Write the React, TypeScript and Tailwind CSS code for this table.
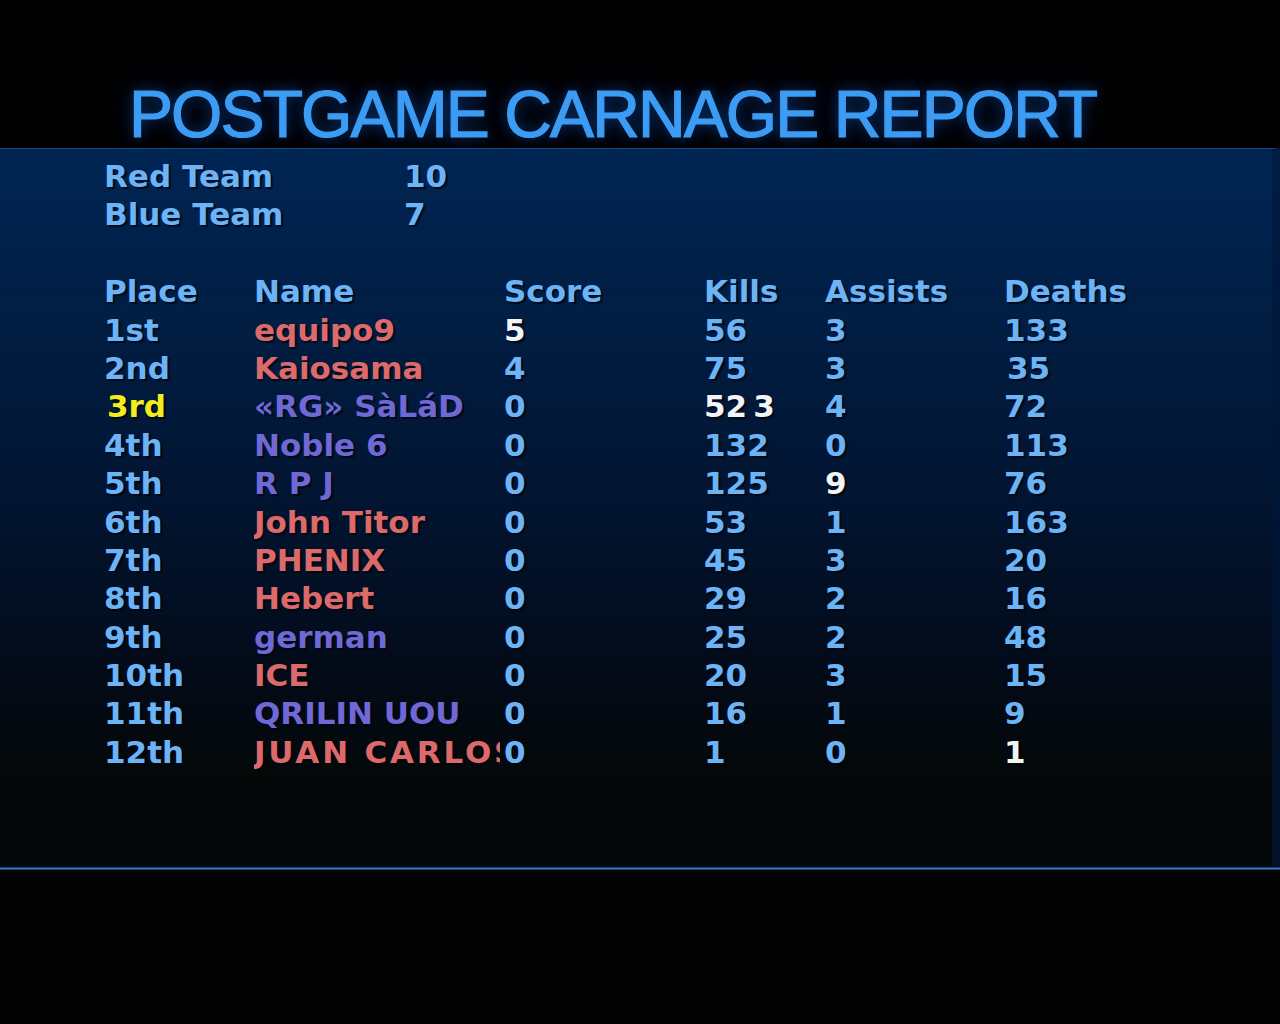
import React from "react";

type Row = {
  place: string;
  name: string;
  team: "red" | "blue";
  score: React.ReactNode;
  kills: React.ReactNode;
  assists: React.ReactNode;
  deaths: React.ReactNode;
  yellow?: boolean;
  wide?: boolean;
};

const W = ({ children }: { children: React.ReactNode }) => (
  <span className="text-[#f4f4f4]">{children}</span>
);

const rows: Row[] = [
  { place: "1st", name: "equipo9", team: "red", score: <W>5</W>, kills: "56", assists: "3", deaths: "133" },
  { place: "2nd", name: "Kaiosama", team: "red", score: "4", kills: "75", assists: "3", deaths: <span className="pl-[3px]">35</span> },
  {
    place: "3rd",
    name: "«RG» SàLáD",
    team: "blue",
    score: "0",
    kills: (
      <W>
        52<span className="ml-[6px]">3</span>
      </W>
    ),
    assists: "4",
    deaths: "72",
    yellow: true,
  },
  { place: "4th", name: "Noble 6", team: "blue", score: "0", kills: "132", assists: "0", deaths: "113" },
  { place: "5th", name: "R P J", team: "blue", score: "0", kills: "125", assists: <W>9</W>, deaths: "76" },
  { place: "6th", name: "John Titor", team: "red", score: "0", kills: "53", assists: "1", deaths: "163" },
  { place: "7th", name: "PHENIX", team: "red", score: "0", kills: "45", assists: "3", deaths: "20" },
  { place: "8th", name: "Hebert", team: "red", score: "0", kills: "29", assists: "2", deaths: "16" },
  { place: "9th", name: "german", team: "blue", score: "0", kills: "25", assists: "2", deaths: "48" },
  { place: "10th", name: "ICE", team: "red", score: "0", kills: "20", assists: "3", deaths: "15" },
  { place: "11th", name: "QRILIN UOU", team: "blue", score: "0", kills: "16", assists: "1", deaths: "9" },
  { place: "12th", name: "JUAN CARLOS", team: "red", score: "0", kills: "1", assists: "0", deaths: <W>1</W>, wide: true },
];

const grid = "grid grid-cols-[150px_250px_200px_121px_179px_1fr] h-[38.4px] leading-[38.4px]";

export default function App() {
  return (
    <div
      className="w-[1280px] h-[1024px] bg-[#030304] overflow-hidden flex flex-col"
      style={{ fontFamily: '"DejaVu Sans", Verdana, sans-serif' }}
    >
      {/* Title area */}
      <div className="h-[148px] shrink-0 bg-black pt-[81px] pl-[129px]">
        <div
          className="text-[66px] leading-[66px] tracking-[-1.9px] text-[#3c9cf4] whitespace-nowrap [-webkit-text-stroke:1.2px_#3c9cf4] [text-shadow:0_0_14px_rgba(20,110,230,0.55),0_0_40px_rgba(10,60,140,0.5)]"
          style={{ fontFamily: '"Liberation Sans", Arial, sans-serif' }}
        >
          POSTGAME CARNAGE REPORT
        </div>
      </div>

      {/* Panel */}
      <div className="h-[720px] shrink-0 border-t border-[#1c4a7c] bg-[linear-gradient(to_bottom,#002553_0%,#011d42_25%,#021430_50%,#030b19_72%,#040808_88%,#05080b_100%)] pl-[104px] pt-[8px] font-bold text-[31px] text-[#6cb4f6] [text-shadow:2px_2px_1px_rgba(0,5,15,0.75)] border-r-[8px] border-r-[#00173a]/60">
        <div className="grid grid-cols-[300px_1fr] h-[38.4px] leading-[38.4px]">
          <span>Red Team</span>
          <span>10</span>
        </div>
        <div className="grid grid-cols-[300px_1fr] h-[38.4px] leading-[38.4px]">
          <span>Blue Team</span>
          <span>7</span>
        </div>
        <div className="h-[38.4px]" />
        <div className={grid}>
          <span>Place</span>
          <span>Name</span>
          <span>Score</span>
          <span>Kills</span>
          <span>Assists</span>
          <span>Deaths</span>
        </div>
        {rows.map((r) => (
          <div key={r.place} className={grid}>
            <span className={r.yellow ? "text-[#f2ee1c] pl-[3px]" : ""}>{r.place}</span>
            <span
              className={
                "w-[246px] overflow-hidden whitespace-nowrap " +
                (r.wide ? "tracking-[2.8px] " : "") +
                (r.team === "red" ? "text-[#dc6a6a]" : "text-[#7068d4]")
              }
            >
              {r.name}
            </span>
            <span>{r.score}</span>
            <span>{r.kills}</span>
            <span>{r.assists}</span>
            <span>{r.deaths}</span>
          </div>
        ))}
      </div>

      {/* Bottom line */}
      <div className="h-[3px] shrink-0 -mt-[1px] bg-[#3a7cc4] border-y border-[#17406e]" />
      <div className="flex-1 bg-[#030303]" />
    </div>
  );
}
